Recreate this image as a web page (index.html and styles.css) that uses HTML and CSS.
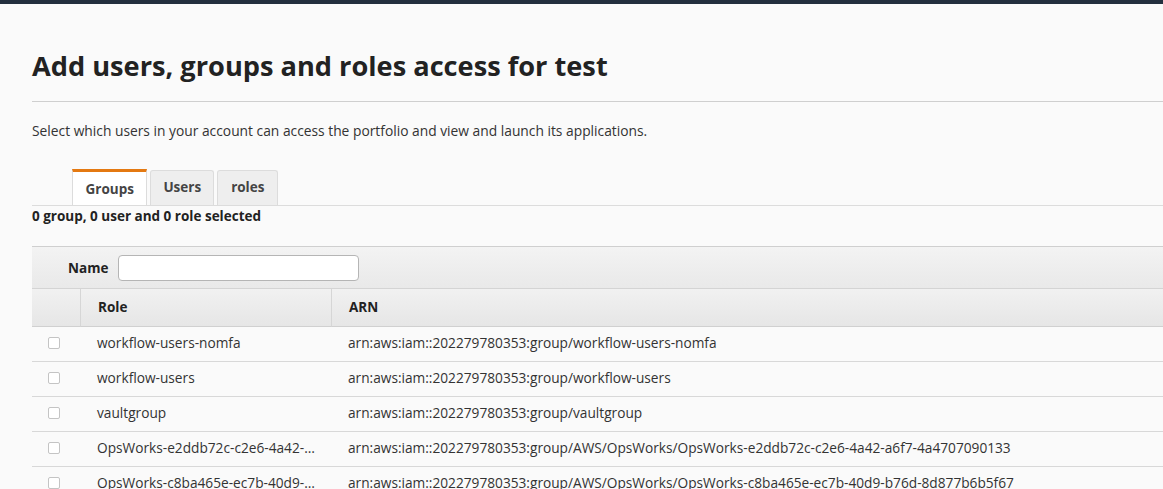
FILE: index.html
```html
<!DOCTYPE html>
<html lang="en">
<head>
<meta charset="utf-8">
<title>Add users, groups and roles access</title>
<link rel="stylesheet" href="styles.css">
</head>
<body>
<div class="topbar"></div>
<main class="page">
  <h1 class="title">Add users, groups and roles access for test</h1>
  <p class="lead">Select which users in your account can access the portfolio and view and launch its applications.</p>
  <div class="tabs">
    <div class="tab active">Groups</div>
    <div class="tab">Users</div>
    <div class="tab">roles</div>
  </div>
  <div class="summary">0 group, 0 user and 0 role selected</div>
  <section class="grid">
    <div class="filter">
      <label class="filter-label" for="name">Name</label>
      <input class="filter-input" id="name" type="text">
    </div>
    <table class="table">
      <colgroup>
        <col class="c-check">
        <col class="c-role">
        <col class="c-arn">
      </colgroup>
      <thead>
        <tr><th></th><th>Role</th><th>ARN</th></tr>
      </thead>
      <tbody>
        <tr><td><span class="cb"></span></td><td class="role">workflow-users-nomfa</td><td>arn:aws:iam::202279780353:group/workflow-users-nomfa</td></tr>
        <tr><td><span class="cb"></span></td><td class="role">workflow-users</td><td>arn:aws:iam::202279780353:group/workflow-users</td></tr>
        <tr><td><span class="cb"></span></td><td class="role">vaultgroup</td><td>arn:aws:iam::202279780353:group/vaultgroup</td></tr>
        <tr><td><span class="cb"></span></td><td class="role">OpsWorks-e2ddb72c-c2e6-4a42-a6f7-4a4707090133</td><td>arn:aws:iam::202279780353:group/AWS/OpsWorks/OpsWorks-e2ddb72c-c2e6-4a42-a6f7-4a4707090133</td></tr>
        <tr><td><span class="cb"></span></td><td class="role">OpsWorks-c8ba465e-ec7b-40d9-b76d-8d877b6b5f67</td><td>arn:aws:iam::202279780353:group/AWS/OpsWorks/OpsWorks-c8ba465e-ec7b-40d9-b76d-8d877b6b5f67</td></tr>
      </tbody>
    </table>
  </section>
</main>
</body>
</html>
```

FILE: styles.css
```css
* { box-sizing: border-box; }
html, body { margin: 0; padding: 0; }
body {
  background: #fafafa;
  font-family: "Open Sans", "Noto Sans", sans-serif;
  font-size: 13.7px;
  color: #333;
  overflow: hidden;
}
.topbar { height: 4px; background: #232f3e; }
.page { padding-left: 32px; }
.title {
  margin: 0;
  padding: 45px 0 19px;
  font-size: 27.2px;
  line-height: 33px;
  font-weight: 700;
  color: #222;
  border-bottom: 1px solid #cfcfcf;
}
.lead { margin: 20px 0 0; font-size: 13.8px; line-height: 18px; color: #333; }
.tabs {
  display: flex;
  align-items: flex-end;
  gap: 3px;
  margin-top: 29px;
  padding-left: 40px;
  border-bottom: 1px solid #dcdcdc;
}
.tab {
  height: 35px;
  padding: 0 12px 3px;
  display: flex;
  align-items: center;
  font-size: 13.5px;
  font-weight: 700;
  color: #444;
  background: #eeeeee;
  border: 1px solid #dcdcdc;
  border-bottom: none;
  border-radius: 3px 3px 0 0;
}
.tab:last-child { padding: 0 13px 3px; }
.tab.active {
  height: 36px;
  padding: 0 12.5px;
  background: #fff;
  border-top: 3px solid #e47911;
  border-radius: 0;
}
.summary { margin-top: 1px; font-size: 13.5px; line-height: 18px; font-weight: 700; color: #222; }
.grid { margin-top: 21px; }
.filter {
  display: flex;
  align-items: center;
  gap: 10px;
  height: 43px;
  padding-left: 36px;
  border-top: 1px solid #cfcfcf;
  border-bottom: 1px solid #d4d4d4;
  background: linear-gradient(#f3f3f3, #e9e9e9);
}
.filter-label { font-size: 13.5px; font-weight: 700; color: #222; }
.filter-input {
  width: 241px;
  height: 26px;
  border: 1px solid #b5b5b5;
  border-radius: 4px;
  background: #fff;
}
.table {
  width: 100%;
  border-collapse: separate;
  border-spacing: 0;
  table-layout: fixed;
}
.c-check { width: 48px; }
.c-role { width: 251px; }
.table th {
  height: 38px;
  text-align: left;
  padding: 0 17px 1px;
  font-size: 13.5px;
  font-weight: 700;
  color: #222;
  background: linear-gradient(#f1f1f1, #e6e6e6);
  border-bottom: 1px solid #d0d0d0;
}
.table th + th { border-left: 1px solid #d6d6d6; }
.table td {
  height: 35px;
  padding: 0 17px 3px;
  border-bottom: 1px solid #d8d8d8;
  white-space: nowrap;
  overflow: hidden;
  text-overflow: ellipsis;
  color: #333;
}
.table td:first-child { padding: 0 0 3px 16px; }
.table td.role { padding-right: 14px; }
.cb {
  display: block;
  width: 12px;
  height: 12px;
  border: 1px solid #c4c4c4;
  border-radius: 2px;
  background: #fff;
}
```
